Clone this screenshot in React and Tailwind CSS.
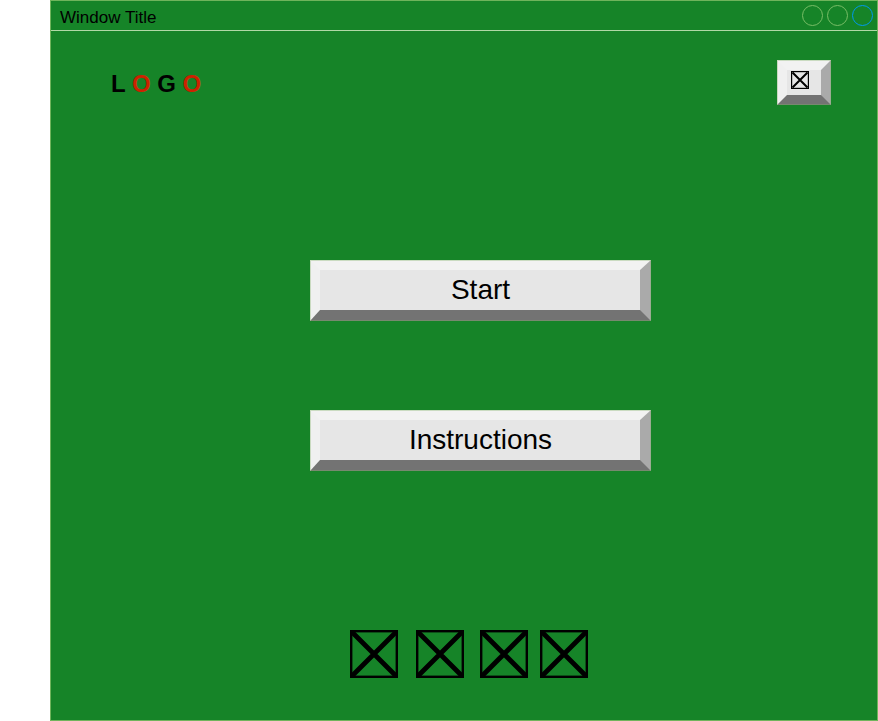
function CrossBox({ size, frame, stroke }) {
  return (
    <svg width={size} height={size} viewBox={`0 0 ${size} ${size}`} fill="none" stroke="#000" className="block shrink-0">
      <rect x={frame / 2} y={frame / 2} width={size - frame} height={size - frame} strokeWidth={frame} />
      <path d={`M1.5 1.5L${size - 1.5} ${size - 1.5}M${size - 1.5} 1.5L1.5 ${size - 1.5}`} strokeWidth={stroke} />
    </svg>
  );
}

function MenuButton({ children }) {
  return (
    <button className="flex h-[61px] w-[341px] items-center justify-center border-t-[10px] border-r-[11px] border-b-[11px] border-l-[10px] border-t-[#f2f2f2] border-r-[#aaaaaa] border-b-[#737373] border-l-[#f0f0f0] bg-[#e6e6e6] pl-px text-[28px] leading-[40px] text-black outline-1 -outline-offset-1 outline-[#82b366]/35">
      {children}
    </button>
  );
}

function WindowControl({ blue }) {
  return (
    <span className={`block size-[21px] rounded-full border ${blue ? "border-[#0098f0]" : "border-[#78bd66]"}`} />
  );
}

export default function App() {
  return (
    <div className="h-[721px] w-[878px] overflow-hidden bg-white pl-[50px] font-['Liberation_Sans',Arial,sans-serif] text-black">
      <main className="flex h-[721px] w-[828px] flex-col border border-[#6fb45c] bg-[#168428]">
        <header className="flex h-[30px] shrink-0 items-start justify-between border-b border-[#b0d9a6] pr-1 pl-[9px]">
          <h1 className="pt-[7px] text-[17px] leading-5">Window Title</h1>
          <div className="flex gap-1 pt-[4px]">
            <WindowControl />
            <WindowControl />
            <WindowControl blue />
          </div>
        </header>
        <div className="flex h-[74px] shrink-0 items-start justify-between pt-[29px] pr-[46px] pl-[60px]">
          <div className="pt-[10px] text-2xl leading-7 font-bold">
            L <span className="text-[#cc2200]">O</span> G <span className="text-[#cc2200]">O</span>
          </div>
          <button className="flex h-[45px] w-[54px] shrink-0 items-start border-[10px] border-t-[#f2f2f2] border-r-[#aaaaaa] border-b-[#737373] border-l-[#f0f0f0] bg-[#e6e6e6] pt-px pl-1 outline-1 -outline-offset-1 outline-[#82b366]/35">
            <CrossBox size={18} frame={1.2} stroke={2} />
          </button>
        </div>
        <nav className="mt-[155px] ml-[259px] flex flex-col gap-[89px]">
          <MenuButton>Start</MenuButton>
          <MenuButton>Instructions</MenuButton>
        </nav>
        <div className="mt-[159px] ml-[299px] flex">
          <CrossBox size={48} frame={2.4} stroke={4.8} />
          <div className="ml-[18px]"><CrossBox size={48} frame={2.4} stroke={4.8} /></div>
          <div className="ml-4"><CrossBox size={48} frame={2.4} stroke={4.8} /></div>
          <div className="ml-3"><CrossBox size={48} frame={2.4} stroke={4.8} /></div>
        </div>
      </main>
    </div>
  );
}
